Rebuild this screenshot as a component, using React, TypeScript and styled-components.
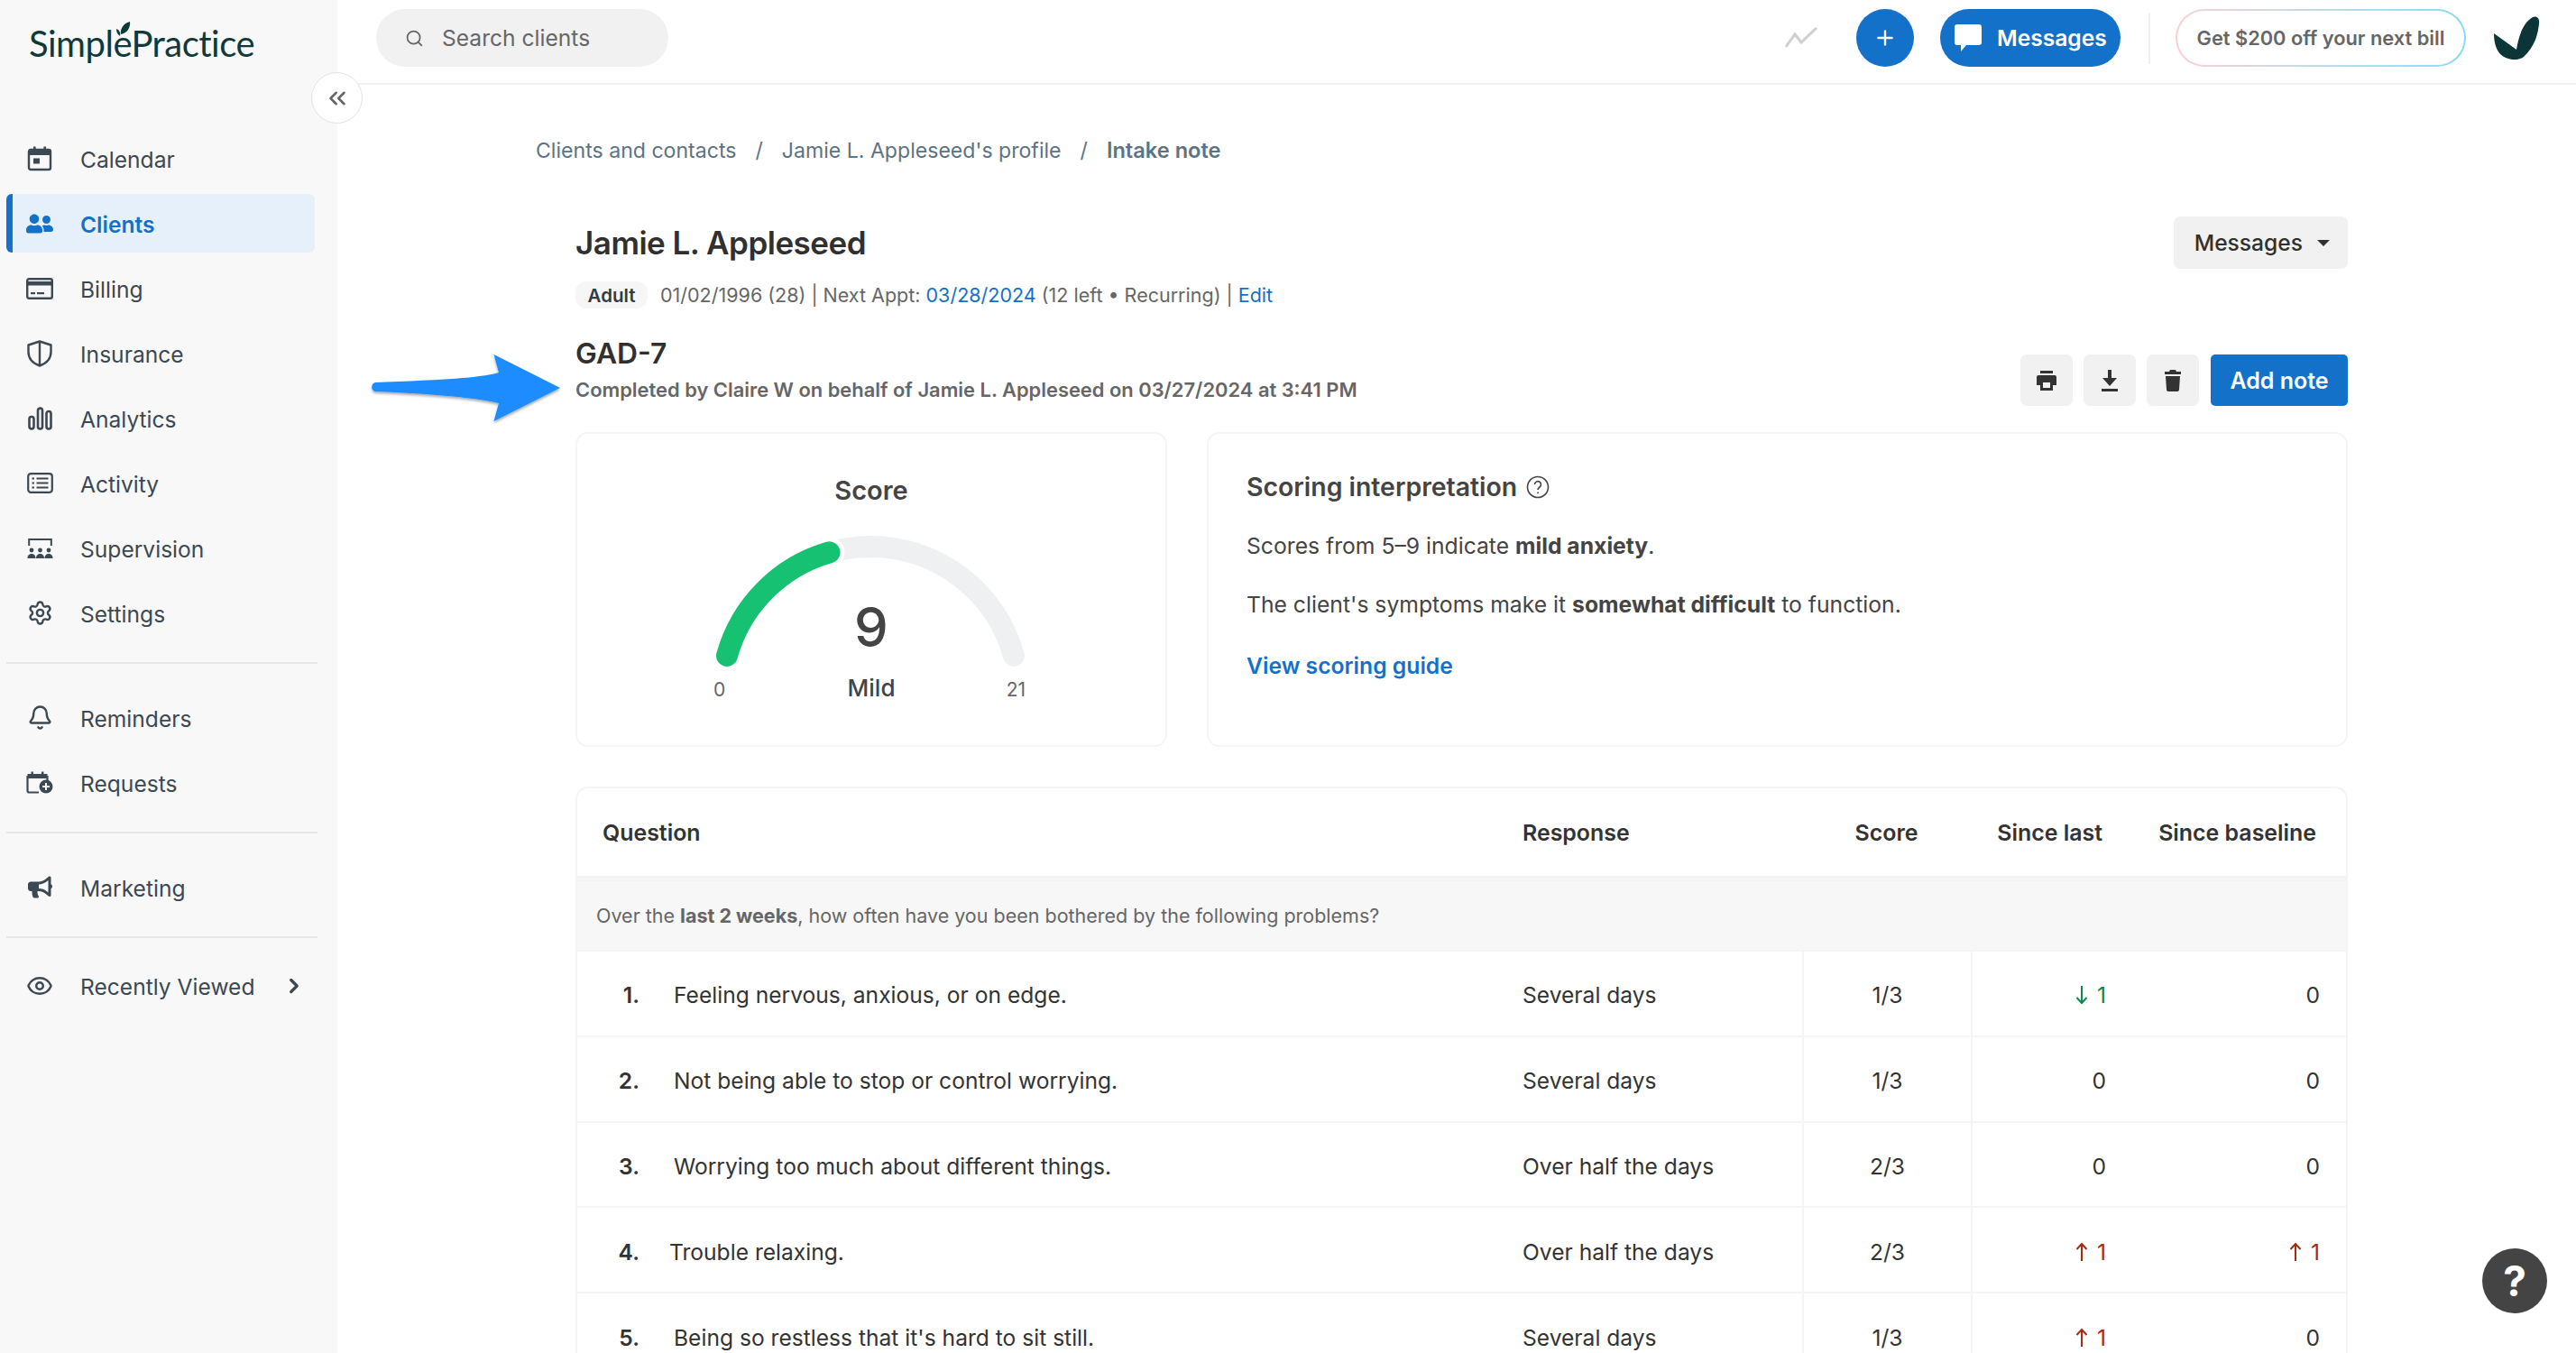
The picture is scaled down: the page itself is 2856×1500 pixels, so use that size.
import React from 'react';
import styled, { createGlobalStyle } from 'styled-components';
import { Search, ChevronsLeft, ChevronRight, Plus, Bell, Eye, Settings } from 'lucide-react';
import { FaUserFriends, FaBullhorn } from 'react-icons/fa';

const BLUE = '#1471c9';
const BORDER = '#f5f5f5';

const GlobalStyle = createGlobalStyle`
    html, body {
        margin: 0;
        height: 100%;
        overflow: hidden;
        background: #fff;
    }
    body {
        font-family: Inter, "Liberation Sans", sans-serif;
        font-size: 24.6px;
        color: #333;
    }
    * {
        box-sizing: border-box;
    }
`;

const Page = styled.div`
    display: flex;
    position: relative;
    height: 1500px;
    overflow: hidden;
`;

const Sidebar = styled.aside`
    width: 374px;
    flex-shrink: 0;
    background: #f8f8f8;
    position: relative;
`;

const LogoBox = styled.div`
    height: 143px;
    padding: 18px 0 0 32px;
`;

const LogoMark = styled.div`
    position: relative;
    display: inline-block;
    font-family: Lato, "Open Sans", sans-serif;
    font-size: 40px;
    line-height: 60px;
    letter-spacing: -0.5px;
    color: #12393a;

    svg {
        position: absolute;
        left: 96px;
        top: 5px;
    }
`;

const CollapseButton = styled.button`
    position: absolute;
    left: 345px;
    top: 80px;
    width: 57px;
    height: 57px;
    border-radius: 50%;
    border: 1.5px solid #e2e2e2;
    background: #fff;
    color: #666;
    padding: 0;
    display: flex;
    align-items: center;
    justify-content: center;
    z-index: 2;
`;

const NavGroup = styled.nav`
    display: flex;
    flex-direction: column;
    gap: 7px;
`;

const NavItem = styled.a<{ $active?: boolean }>`
    display: flex;
    align-items: center;
    height: 65px;
    width: 342px;
    margin-left: 7px;
    padding: 0 15px 0 16px;
    gap: 31px;
    border-left: 7px solid ${({ $active }) => ($active ? BLUE : 'transparent')};
    border-radius: 6px;
    background: ${({ $active }) => ($active ? '#e6f0fa' : 'transparent')};
    color: ${({ $active }) => ($active ? BLUE : '#3c4852')};
    font-weight: ${({ $active }) => ($active ? 600 : 400)};
    white-space: nowrap;
`;

const NavIcon = styled.span`
    width: 28px;
    height: 28px;
    flex-shrink: 0;
    display: flex;
    align-items: center;
    justify-content: center;

    svg {
        flex-shrink: 0;
    }
`;

const NavLabel = styled.span`
    padding-top: 2px;
`;

const NavChevron = styled.span`
    margin-left: auto;
    display: flex;
`;

const NavDivider = styled.hr<{ $tight?: boolean }>`
    width: 345px;
    height: 2px;
    border: 0;
    background: #e6e6e6;
    margin: 22px 0 ${({ $tight }) => ($tight ? '20px' : '27px')} 7px;
`;

const Main = styled.main`
    flex: 1;
    min-width: 0;
`;

const TopBar = styled.header`
    height: 94px;
    display: flex;
    align-items: center;
    padding: 0 40px 8px 43px;
    border-bottom: 2px solid #f2f2f2;
    background: #fff;
`;

const SearchBox = styled.div`
    width: 324px;
    height: 64px;
    border-radius: 32px;
    background: #f1f1f1;
    color: #666;
    display: flex;
    align-items: center;
    gap: 20px;
    padding-left: 32px;
`;

const TopActions = styled.div`
    margin-left: auto;
    display: flex;
    align-items: center;
`;

const PlusButton = styled.button`
    width: 64px;
    height: 64px;
    border-radius: 50%;
    border: 0;
    padding: 0;
    background: ${BLUE};
    color: #fff;
    display: flex;
    align-items: center;
    justify-content: center;
    margin: 0 29px 0 43px;
`;

const MessagesPill = styled.button`
    width: 200px;
    height: 64px;
    border-radius: 32px;
    border: 0;
    padding: 0 0 0 16px;
    background: ${BLUE};
    color: #fff;
    font: 600 24.6px Inter, sans-serif;
    display: flex;
    align-items: center;
    gap: 17px;
`;

const TopDivider = styled.span`
    width: 2px;
    height: 57px;
    background: #f0f0f0;
    margin: 0 28px 0 31px;
`;

const PromoPill = styled.button`
    width: 322px;
    height: 64px;
    border-radius: 32px;
    border: 2px solid transparent;
    background: linear-gradient(#fff, #fff) padding-box,
        linear-gradient(90deg, #fbd0d4, #a9dff0 70%, #86dcef) border-box;
    color: #666;
    font: 600 21.8px Inter, sans-serif;
    padding: 0;
    margin-right: 31px;
`;

const Content = styled.div`
    padding: 58px 0 0 0;
`;

const Breadcrumbs = styled.div`
    margin-left: 220px;
    height: 30px;
    line-height: 30px;
    font-size: 23.1px;
    color: #5d7282;
    display: flex;
    gap: 21px;
`;

const CrumbCurrent = styled.span`
    font-weight: 600;
    font-size: 23.6px;
`;

const Section = styled.section`
    margin: 58px 0 0 264px;
    width: 1965px;
`;

const TitleRow = styled.div`
    display: flex;
    justify-content: space-between;
    align-items: center;
    height: 58px;
`;

const ClientName = styled.h1`
    margin: 0;
    font-size: 35px;
    font-weight: 600;
    letter-spacing: -0.5px;
    color: #303030;
`;

const GrayButton = styled.button`
    height: 58px;
    border: 0;
    border-radius: 7px;
    background: #f1f1f1;
    color: #303030;
    font: 500 24.6px Inter, sans-serif;
    display: flex;
    align-items: center;
    justify-content: center;
    gap: 16px;
    padding: 0 20px 0 23px;
`;

const Caret = styled.span`
    width: 0;
    height: 0;
    border-left: 7px solid transparent;
    border-right: 7px solid transparent;
    border-top: 7px solid #303030;
`;

const MetaRow = styled.div`
    display: flex;
    align-items: center;
    gap: 14px;
    height: 30px;
    margin-top: 14px;
    font-size: 21.5px;
    color: #666;
`;

const Tag = styled.span`
    width: 80px;
    height: 30px;
    border-radius: 12px;
    background: #f6f6f6;
    color: #333c44;
    font-size: 20.5px;
    font-weight: 600;
    display: flex;
    align-items: center;
    justify-content: center;
`;

const TextLink = styled.a`
    color: ${BLUE};
`;

const MeasureRow = styled.div`
    display: flex;
    justify-content: space-between;
    align-items: flex-end;
    height: 80px;
    margin-top: 28px;
`;

const MeasureHeading = styled.div`
    padding-bottom: 3px;
`;

const MeasureTitle = styled.h2`
    margin: 0;
    font-size: 31.8px;
    line-height: 40px;
    font-weight: 600;
    color: #303030;
`;

const Completed = styled.div`
    margin-top: 5px;
    font-size: 21.9px;
    line-height: 30px;
    font-weight: 600;
    color: #666;
`;

const NoteActions = styled.div`
    display: flex;
    gap: 12px;
`;

const IconButton = styled.button`
    width: 58px;
    height: 57px;
    border: 0;
    border-radius: 7px;
    padding: 0;
    background: #f1f1f1;
    display: flex;
    align-items: center;
    justify-content: center;
`;

const AddNote = styled.button`
    width: 152px;
    height: 57px;
    border: 0;
    border-radius: 5px;
    background: ${BLUE};
    color: #fff;
    font: 600 25px Inter, sans-serif;
    margin-left: 1px;
`;

const Cards = styled.div`
    display: grid;
    grid-template-columns: 656px 1fr;
    gap: 44px;
    margin-top: 29px;
`;

const Card = styled.div`
    height: 349px;
    border: 2px solid ${BORDER};
    border-radius: 14px;
`;

const ScoreCard = styled(Card)`
    display: flex;
    flex-direction: column;
    align-items: center;
    padding-top: 45px;
`;

const ScoreTitle = styled.div`
    font-size: 29px;
    line-height: 36px;
    font-weight: 600;
    color: #444;
`;

const Gauge = styled.div`
    position: relative;
    width: 380px;
    height: 195px;
    margin-top: 28px;
`;

const GaugeValue = styled.div`
    position: absolute;
    left: 0;
    right: 0;
    top: 71px;
    text-align: center;
    font-size: 60px;
    line-height: 68px;
    font-weight: 500;
    color: #444;
`;

const GaugeLabel = styled.div`
    position: absolute;
    left: 0;
    right: 0;
    top: 156px;
    text-align: center;
    font-size: 26px;
    line-height: 34px;
    font-weight: 500;
    color: #444;
`;

const GaugeTick = styled.div<{ $side: 'min' | 'max' }>`
    position: absolute;
    top: 160px;
    ${({ $side }) => ($side === 'min' ? 'left: 15px;' : 'right: 19px;')}
    font-size: 21px;
    line-height: 30px;
    color: #666;
`;

const InterpretationCard = styled(Card)`
    padding: 41px 0 0 42px;
`;

const InterpretationTitle = styled.h3`
    margin: 0;
    display: flex;
    align-items: center;
    gap: 10px;
    font-size: 28.4px;
    line-height: 36px;
    font-weight: 600;
    color: #444;
`;

const InterpretationLine = styled.p`
    margin: 29px 0 0;
    line-height: 36px;
    font-size: 24.7px;
    color: #444;
`;

const GuideLink = styled.a`
    display: block;
    margin-top: 32px;
    line-height: 36px;
    font-size: 24.7px;
    font-weight: 600;
    color: ${BLUE};
`;

const Table = styled.div`
    margin-top: 44px;
    border: 2px solid ${BORDER};
    border-radius: 14px 14px 0 0;
    border-bottom: 0;
`;

const COLUMNS = '1018px 340px 187px 179px 1fr';

const HeaderRow = styled.div`
    display: grid;
    grid-template-columns: ${COLUMNS};
    align-items: center;
    height: 103px;
    border-bottom: 6px solid #f3f3f3;
    font-size: 24.9px;
    font-weight: 600;
    color: #333;
`;

const HeaderCell = styled.div<{ $align?: string; $inset?: string }>`
    text-align: ${({ $align }) => $align || 'left'};
    padding: ${({ $inset }) => $inset || '0'};
`;

const PromptRow = styled.div`
    height: 78px;
    padding-left: 21px;
    display: flex;
    align-items: center;
    background: #f7f7f7;
    border-bottom: 2px solid ${BORDER};
    font-size: 21.5px;
    color: #666;
`;

const Row = styled.div`
    display: grid;
    grid-template-columns: ${COLUMNS};
    height: 94.8px;
    border-bottom: 2px solid ${BORDER};
`;

const Cell = styled.div<{ $align?: string; $ruled?: boolean; $tone?: string }>`
    display: flex;
    align-items: center;
    justify-content: ${({ $align }) => $align || 'flex-start'};
    gap: 10px;
    padding-top: 4px;
    color: ${({ $tone }) => $tone || '#333'};
    border-left: ${({ $ruled }) => ($ruled ? `2px solid ${BORDER}` : '0')};
`;

const QuestionCell = styled(Cell)`
    padding-left: 50px;
    gap: 0;
`;

const Number = styled.span`
    width: 19px;
    font-weight: 600;
    white-space: nowrap;
    display: flex;
    justify-content: flex-end;
`;

const QuestionText = styled.span<{ $tight?: boolean }>`
    margin-left: ${({ $tight }) => ($tight ? '33px' : '38px')};
`;

const ResponseCell = styled(Cell)`
    padding-left: 30px;
`;

const DeltaCell = styled(Cell)`
    justify-content: flex-end;
    padding-right: 29px;
`;

const HelpButton = styled.button`
    position: absolute;
    left: 2752px;
    top: 1384px;
    width: 72px;
    height: 72px;
    border-radius: 50%;
    border: 0;
    padding: 0;
    background: #444;
    color: #fff;
    font: 700 46px Inter, sans-serif;
`;

const ArrowOverlay = styled.svg`
    position: absolute;
    left: 400px;
    top: 380px;
`;

const CalendarIcon = () => (
    <svg width="28" height="29" viewBox="0 0 28 29" fill="none">
        <rect x="2" y="5" width="24" height="22" rx="2" stroke="#3c4852" strokeWidth="2.4" />
        <rect x="2" y="5" width="24" height="6" fill="#3c4852" />
        <rect x="7" y="1.5" width="2.6" height="5" fill="#3c4852" />
        <rect x="18.4" y="1.5" width="2.6" height="5" fill="#3c4852" />
        <rect x="7" y="14.5" width="7" height="6" fill="#3c4852" />
    </svg>
);

const CardIcon = () => (
    <svg width="30" height="24" viewBox="0 0 30 24" fill="none">
        <rect x="1.2" y="1.2" width="27.6" height="21.6" rx="2" stroke="#3c4852" strokeWidth="2.4" />
        <rect x="1.2" y="4" width="27.6" height="4.5" fill="#3c4852" />
        <rect x="5" y="16" width="5" height="2.2" fill="#3c4852" />
        <rect x="12" y="16" width="8" height="2.2" fill="#3c4852" />
    </svg>
);

const ShieldIcon = () => (
    <svg width="28" height="30" viewBox="0 0 28 30" fill="none" stroke="#3c4852" strokeWidth="2.4" strokeLinejoin="round">
        <path d="M14 1.5 26.5 5.5V13C26.5 21 21 26 14 28.5 7 26 1.5 21 1.5 13V5.5Z" />
        <path d="M14 1.5V28.5" />
    </svg>
);

const BarsIcon = () => (
    <svg width="27" height="26" viewBox="0 0 27 26" fill="none" stroke="#3c4852" strokeWidth="2.6">
        <rect x="1.5" y="11" width="5" height="13.5" rx="2.5" />
        <rect x="11" y="1.5" width="5" height="23" rx="2.5" />
        <rect x="20.5" y="5" width="5" height="19.5" rx="2.5" />
    </svg>
);

const ListIcon = () => (
    <svg width="29" height="23" viewBox="0 0 29 23" fill="none">
        <rect x="1.2" y="1.2" width="26.6" height="20.6" rx="3" stroke="#3c4852" strokeWidth="2.2" />
        <path d="M5.5 6.5h2.5M5.5 11.5h2.5M5.5 16.5h2.5M10.5 6.5h13M10.5 11.5h13M10.5 16.5h13" stroke="#3c4852" strokeWidth="2.2" />
    </svg>
);

const SupervisionIcon = () => (
    <svg width="29" height="24" viewBox="0 0 29 24" fill="none">
        <path d="M2.2 9V2h24.6v7" stroke="#3c4852" strokeWidth="2" />
        <g fill="#3c4852">
            <circle cx="5" cy="14" r="2.4" />
            <circle cx="14.5" cy="14" r="2.4" />
            <circle cx="24" cy="14" r="2.4" />
            <path d="M.5 23c0-3.5 2-5 4.5-5s4.5 1.5 4.5 5zM10 23c0-3.5 2-5 4.5-5s4.5 1.5 4.5 5zM19.5 23c0-3.5 2-5 4.5-5s4.5 1.5 4.5 5z" />
        </g>
    </svg>
);

const RequestIcon = () => (
    <svg width="30" height="26" viewBox="0 0 30 26" fill="none">
        <path d="M14 23.5H3.5a2 2 0 0 1-2-2V6h22v4" stroke="#3c4852" strokeWidth="2.2" />
        <rect x="1.5" y="3" width="22" height="5" fill="#3c4852" />
        <rect x="5.5" y="0.5" width="2.4" height="4" fill="#3c4852" />
        <rect x="17" y="0.5" width="2.4" height="4" fill="#3c4852" />
        <circle cx="22" cy="17" r="7.5" fill="#3c4852" />
        <path d="M22 13v8M18 17h8" stroke="#f8f8f8" strokeWidth="2" />
    </svg>
);

const TrendIcon = () => (
    <svg width="36" height="24" viewBox="0 0 36 24" fill="none" stroke="#cfcfcf" strokeWidth="3">
        <path d="M1 22 11 8l7 9L35 1" />
    </svg>
);

const BubbleIcon = () => (
    <svg width="30" height="30" viewBox="0 0 30 30" fill="#fff">
        <path d="M3 0h24a3 3 0 0 1 3 3v17a3 3 0 0 1-3 3H13l-6 7v-7H3a3 3 0 0 1-3-3V3a3 3 0 0 1 3-3z" />
    </svg>
);

const LeafMark = () => (
    <svg width="51" height="48" viewBox="0 0 51 48" fill="#0b3536">
        <path d="M0 19 25 37C27 25 31 8 43 1 47-1 51 2 50 8 49 20 45 34 33 45 28 49 20 49 13 46 4 42 0 32 0 19Z" />
    </svg>
);

const PrintIcon = () => (
    <svg width="24" height="24" viewBox="0 0 24 24" fill="#333">
        <rect x="5" y="1" width="14" height="3" />
        <path d="M3 6h18a2 2 0 0 1 2 2v9h-4v6H5v-6H1V8a2 2 0 0 1 2-2zm5 8v6h8v-6z" fillRule="evenodd" />
    </svg>
);

const DownloadIcon = () => (
    <svg width="20" height="24" viewBox="0 0 20 24" fill="#333">
        <path d="M8 0h4v9h6l-8 9-8-9h6z" />
        <rect x="1" y="21" width="18" height="3" />
    </svg>
);

const TrashIcon = () => (
    <svg width="18" height="24" viewBox="0 0 18 24" fill="#333">
        <path d="M6 0h6l1 2h5v3H0V2h5z" />
        <path d="M1 7h16l-1 15a2 2 0 0 1-2 2H4a2 2 0 0 1-2-2z" />
    </svg>
);

const HelpOutline = () => (
    <svg width="26" height="26" viewBox="0 0 26 26" fill="none" stroke="#444" strokeWidth="1.6">
        <circle cx="13" cy="13" r="11.5" />
        <path d="M9.5 10a3.5 3.5 0 1 1 5.5 3c-1.3.9-2 1.5-2 3" />
        <path d="M13 18.5v1.8" />
    </svg>
);

const ArrowUp = ({ color }: { color: string }) => (
    <svg width="14" height="22" viewBox="0 0 14 22" fill="none" stroke={color} strokeWidth="2">
        <path d="M7 21V2M1.5 8 7 2l5.5 6" />
    </svg>
);

const ArrowDown = ({ color }: { color: string }) => (
    <svg width="14" height="22" viewBox="0 0 14 22" fill="none" stroke={color} strokeWidth="2">
        <path d="M7 1v19M1.5 14 7 20l5.5-6" />
    </svg>
);

const navTop = [
    { label: 'Calendar', icon: <CalendarIcon /> },
    { label: 'Clients', icon: <FaUserFriends size={30} color={BLUE} />, active: true },
    { label: 'Billing', icon: <CardIcon /> },
    { label: 'Insurance', icon: <ShieldIcon /> },
    { label: 'Analytics', icon: <BarsIcon /> },
    { label: 'Activity', icon: <ListIcon /> },
    { label: 'Supervision', icon: <SupervisionIcon /> },
    { label: 'Settings', icon: <Settings size={29} color="#3c4852" strokeWidth={2} /> },
];

const navAlerts = [
    { label: 'Reminders', icon: <Bell size={29} color="#3c4852" strokeWidth={2} /> },
    { label: 'Requests', icon: <RequestIcon /> },
];

const rows = [
    { n: '1.', q: 'Feeling nervous, anxious, or on edge.', r: 'Several days', s: '1/3', last: 'down', base: '' },
    { n: '2.', q: 'Not being able to stop or control worrying.', r: 'Several days', s: '1/3', last: '', base: '' },
    { n: '3.', q: 'Worrying too much about different things.', r: 'Over half the days', s: '2/3', last: '', base: '' },
    { n: '4.', q: 'Trouble relaxing.', r: 'Over half the days', s: '2/3', last: 'up', base: 'up', tight: true },
    { n: '5.', q: "Being so restless that it's hard to sit still.", r: 'Several days', s: '1/3', last: 'up', base: '' },
];

const GREEN_TEXT = '#0b8a4f';
const RED_TEXT = '#a62b12';

const Delta = ({ dir, ruled }: { dir: string; ruled?: boolean }) => {
    if (dir === 'up') {
        return (
            <DeltaCell $tone={RED_TEXT} $ruled={ruled}>
                <ArrowUp color={RED_TEXT} />1
            </DeltaCell>
        );
    }
    if (dir === 'down') {
        return (
            <DeltaCell $tone={GREEN_TEXT} $ruled={ruled}>
                <ArrowDown color={GREEN_TEXT} />1
            </DeltaCell>
        );
    }
    return <DeltaCell $ruled={ruled}>0</DeltaCell>;
};

const GAUGE_R = 165;

const polar = (deg: number) => {
    const a = (deg * Math.PI) / 180;
    return `${189 + GAUGE_R * Math.cos(a)} ${181 - GAUGE_R * Math.sin(a)}`;
};

const arc = (from: number, to: number) => `M${polar(from)}A${GAUGE_R} ${GAUGE_R} 0 0 1 ${polar(to)}`;

export default function App() {
    return (
        <Page>
            <GlobalStyle />
            <Sidebar>
                <LogoBox>
                    <LogoMark>
                        SimplePractice
                        <svg width="18" height="18" viewBox="0 0 18 18" fill="#12393a">
                            <path d="M6 15C5 10 8 3 16 1c1 6-3 13-10 14z" />
                            <path d="M5 17C2 15 1 12 1 9c3 1 5 4 4 8z" />
                        </svg>
                    </LogoMark>
                </LogoBox>
                <CollapseButton aria-label="Collapse sidebar">
                    <ChevronsLeft size={30} strokeWidth={2} />
                </CollapseButton>
                <NavGroup>
                    {navTop.map((item) => (
                        <NavItem key={item.label} $active={item.active}>
                            <NavIcon>{item.icon}</NavIcon>
                            <NavLabel>{item.label}</NavLabel>
                        </NavItem>
                    ))}
                </NavGroup>
                <NavDivider />
                <NavGroup>
                    {navAlerts.map((item) => (
                        <NavItem key={item.label}>
                            <NavIcon>{item.icon}</NavIcon>
                            <NavLabel>{item.label}</NavLabel>
                        </NavItem>
                    ))}
                </NavGroup>
                <NavDivider />
                <NavGroup>
                    <NavItem>
                        <NavIcon>
                            <FaBullhorn size={27} color="#3c4852" />
                        </NavIcon>
                        <NavLabel>Marketing</NavLabel>
                    </NavItem>
                </NavGroup>
                <NavDivider $tight />
                <NavGroup>
                    <NavItem>
                        <NavIcon>
                            <Eye size={30} color="#3c4852" strokeWidth={2} />
                        </NavIcon>
                        <NavLabel>Recently Viewed</NavLabel>
                        <NavChevron>
                            <ChevronRight size={26} color="#3c4852" strokeWidth={3} />
                        </NavChevron>
                    </NavItem>
                </NavGroup>
            </Sidebar>
            <Main>
                <TopBar>
                    <SearchBox>
                        <Search size={21} strokeWidth={2} />
                        Search clients
                    </SearchBox>
                    <TopActions>
                        <TrendIcon />
                        <PlusButton aria-label="Add">
                            <Plus size={26} strokeWidth={2.2} />
                        </PlusButton>
                        <MessagesPill>
                            <BubbleIcon />
                            Messages
                        </MessagesPill>
                        <TopDivider />
                        <PromoPill>Get $200 off your next bill</PromoPill>
                        <LeafMark />
                    </TopActions>
                </TopBar>
                <Content>
                    <Breadcrumbs>
                        <span>Clients and contacts</span>
                        <span>/</span>
                        <span>Jamie L. Appleseed's profile</span>
                        <span>/</span>
                        <CrumbCurrent>Intake note</CrumbCurrent>
                    </Breadcrumbs>
                    <Section>
                        <TitleRow>
                            <ClientName>Jamie L. Appleseed</ClientName>
                            <GrayButton>
                                Messages
                                <Caret />
                            </GrayButton>
                        </TitleRow>
                        <MetaRow>
                            <Tag>Adult</Tag>
                            <span>
                                01/02/1996 (28) | Next Appt: <TextLink>03/28/2024</TextLink> (12 left • Recurring) |{' '}
                                <TextLink>Edit</TextLink>
                            </span>
                        </MetaRow>
                        <MeasureRow>
                            <MeasureHeading>
                                <MeasureTitle>GAD-7</MeasureTitle>
                                <Completed>
                                    Completed by Claire W on behalf of Jamie L. Appleseed on 03/27/2024 at 3:41 PM
                                </Completed>
                            </MeasureHeading>
                            <NoteActions>
                                <IconButton aria-label="Print">
                                    <PrintIcon />
                                </IconButton>
                                <IconButton aria-label="Download">
                                    <DownloadIcon />
                                </IconButton>
                                <IconButton aria-label="Delete">
                                    <TrashIcon />
                                </IconButton>
                                <AddNote>Add note</AddNote>
                            </NoteActions>
                        </MeasureRow>
                        <Cards>
                            <ScoreCard>
                                <ScoreTitle>Score</ScoreTitle>
                                <Gauge>
                                    <svg width="380" height="195" viewBox="0 0 380 195" fill="none" strokeLinecap="round" strokeWidth="24">
                                        <path d={arc(164.5, 15.5)} stroke="#eef0f2" />
                                        <path d={arc(164.5, 106)} stroke="#fff" strokeWidth="34" />
                                        <path d={arc(164.5, 106)} stroke="#17c172" />
                                    </svg>
                                    <GaugeValue>9</GaugeValue>
                                    <GaugeLabel>Mild</GaugeLabel>
                                    <GaugeTick $side="min">0</GaugeTick>
                                    <GaugeTick $side="max">21</GaugeTick>
                                </Gauge>
                            </ScoreCard>
                            <InterpretationCard>
                                <InterpretationTitle>
                                    Scoring interpretation
                                    <HelpOutline />
                                </InterpretationTitle>
                                <InterpretationLine>
                                    Scores from 5–9 indicate <strong>mild anxiety</strong>.
                                </InterpretationLine>
                                <InterpretationLine>
                                    The client's symptoms make it <strong>somewhat difficult</strong> to function.
                                </InterpretationLine>
                                <GuideLink>View scoring guide</GuideLink>
                            </InterpretationCard>
                        </Cards>
                        <Table>
                            <HeaderRow>
                                <HeaderCell $inset="0 0 0 28px">Question</HeaderCell>
                                <HeaderCell $inset="0 0 0 30px">Response</HeaderCell>
                                <HeaderCell $align="center">Score</HeaderCell>
                                <HeaderCell $align="right" $inset="0 33px 0 0">Since last</HeaderCell>
                                <HeaderCell $align="right" $inset="0 33px 0 0">Since baseline</HeaderCell>
                            </HeaderRow>
                            <PromptRow>
                                <span>
                                    Over the <strong>last 2 weeks</strong>, how often have you been bothered by the following problems?
                                </span>
                            </PromptRow>
                            {rows.map((row) => (
                                <Row key={row.n}>
                                    <QuestionCell>
                                        <Number>{row.n}</Number>
                                        <QuestionText $tight={row.tight}>{row.q}</QuestionText>
                                    </QuestionCell>
                                    <ResponseCell>{row.r}</ResponseCell>
                                    <Cell $align="center" $ruled>{row.s}</Cell>
                                    <Delta dir={row.last} ruled />
                                    <Delta dir={row.base} />
                                </Row>
                            ))}
                        </Table>
                    </Section>
                </Content>
            </Main>
            <ArrowOverlay width="240" height="100" viewBox="400 380 240 100">
                <defs>
                    <filter id="arrowShadow" x="-10%" y="-20%" width="120%" height="150%">
                        <feDropShadow dx="0" dy="2" stdDeviation="1.5" floodColor="#000" floodOpacity="0.35" />
                    </filter>
                </defs>
                <path
                    d="M416 424C470 422 530 420 553 413L547.5 393 621 430 547.5 467 553 447C530 441 470 436 416 434 411 433 411 425 416 424Z"
                    fill="#1a8cff"
                    filter="url(#arrowShadow)"
                />
            </ArrowOverlay>
            <HelpButton aria-label="Help">?</HelpButton>
        </Page>
    );
}
